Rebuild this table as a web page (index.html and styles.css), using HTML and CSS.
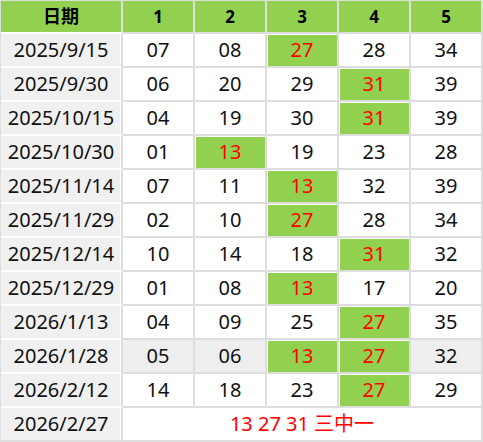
FILE: index.html
```html
<!DOCTYPE html>
<html lang="zh-CN">
<head>
<meta charset="utf-8">
<title>开奖记录</title>
<link rel="stylesheet" href="styles.css">
</head>
<body>
<table class="grid">
  <thead>
    <tr>
      <th class="date">日期</th>
      <th class="num">1</th>
      <th class="num">2</th>
      <th class="num">3</th>
      <th class="num">4</th>
      <th class="num">5</th>
    </tr>
  </thead>
  <tbody>
    <tr><td class="date">2025/9/15</td><td>07</td><td>08</td><td class="hit">27</td><td>28</td><td>34</td></tr>
    <tr><td class="date">2025/9/30</td><td>06</td><td>20</td><td>29</td><td class="hit">31</td><td>39</td></tr>
    <tr><td class="date">2025/10/15</td><td>04</td><td>19</td><td>30</td><td class="hit">31</td><td>39</td></tr>
    <tr><td class="date">2025/10/30</td><td>01</td><td class="hit">13</td><td>19</td><td>23</td><td>28</td></tr>
    <tr><td class="date">2025/11/14</td><td>07</td><td>11</td><td class="hit">13</td><td>32</td><td>39</td></tr>
    <tr><td class="date">2025/11/29</td><td>02</td><td>10</td><td class="hit">27</td><td>28</td><td>34</td></tr>
    <tr><td class="date">2025/12/14</td><td>10</td><td>14</td><td>18</td><td class="hit">31</td><td>32</td></tr>
    <tr><td class="date">2025/12/29</td><td>01</td><td>08</td><td class="hit">13</td><td>17</td><td>20</td></tr>
    <tr><td class="date">2026/1/13</td><td>04</td><td>09</td><td>25</td><td class="hit">27</td><td>35</td></tr>
    <tr class="alt"><td class="date">2026/1/28</td><td>05</td><td>06</td><td class="hit">13</td><td class="hit">27</td><td>32</td></tr>
    <tr><td class="date">2026/2/12</td><td>14</td><td>18</td><td>23</td><td class="hit">27</td><td>29</td></tr>
    <tr class="last"><td class="date">2026/2/27</td><td class="result" colspan="5">13 27 31 三中一</td></tr>
  </tbody>
</table>
</body>
</html>
```

FILE: styles.css
```css
html, body {
  margin: 0;
  padding: 0;
  background: #fff;
}

.grid {
  border-collapse: separate;
  border-spacing: 0;
  table-layout: fixed;
  border-top: 1px solid #ddd;
  border-left: 1px solid #ddd;
  font-family: "Noto Sans", "Noto Sans CJK SC", sans-serif;
  color: #111;
}

.grid th,
.grid td {
  padding: 0;
  text-align: center;
  vertical-align: middle;
  border-right: 2px solid #ddd;
  border-bottom: 2px solid #ddd;
  background: #fff;
}

.grid th {
  height: 31px;
  background: #92d050;
  font-size: 17px;
  font-weight: bold;
  color: #000;
  line-height: 31px;
}

.grid th.date {
  width: 120px;
  font-size: 18px;
  border-bottom-color: #fff;
}

.grid th.num {
  width: 70px;
}

.grid td {
  height: 32px;
  font-size: 20px;
  line-height: 32px;
}

.grid td.date {
  background: #f0f0f0;
  border-bottom-color: #fff;
  box-shadow: inset -1px 0 0 #fff;
}

.grid tr.alt td {
  background: #eeeeee;
}

.grid tr.alt td.date {
  background: #f0f0f0;
}

.grid td.hit,
.grid tr.alt td.hit {
  background: #92d050;
  color: #ff0000;
  box-shadow: inset 1px 1px 0 #fff;
}

.grid tr.last td.date {
  border-bottom-color: #ddd;
}

.grid td.result {
  color: #ff0000;
}
```
